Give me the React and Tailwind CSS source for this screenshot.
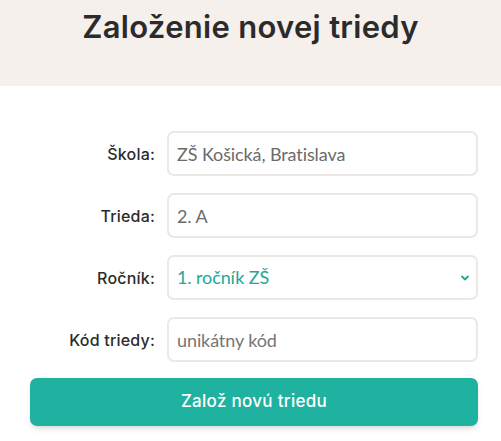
export default function App() {
  return (
    <div className="min-h-screen bg-white">
      <div className="h-[86px] bg-[#f5f0ec] flex justify-center pt-[7px]">
        <h1 className="font-['Inter',sans-serif] text-[31px] font-semibold text-[#2b2b2b] leading-[40px] tracking-[0.3px]">
          Založenie novej triedy
        </h1>
      </div>

      <form className="pt-[45px] pl-[30px] pr-[23px]">
        <div className="grid grid-cols-[125px_1fr] gap-x-3 gap-y-[17px] items-center">
          <label className="text-right font-['Inter',sans-serif] font-medium text-[16px] tracking-[0.2px] text-[#2b2b2b]">
            Škola:
          </label>
          <input
            defaultValue="ZŠ Košická, Bratislava"
            className="h-[45px] w-full px-[8px] border-2 border-[#ece8e4] rounded-[7px] font-['Lato',sans-serif] text-[18px] tracking-[-0.1px] text-[#6b6b6b] outline-none"
          />

          <label className="text-right font-['Inter',sans-serif] font-medium text-[16px] tracking-[0.2px] text-[#2b2b2b]">
            Trieda:
          </label>
          <input
            defaultValue="2. A"
            className="h-[45px] w-full px-[8px] border-2 border-[#ece8e4] rounded-[7px] font-['Lato',sans-serif] text-[18px] tracking-[-0.1px] text-[#6b6b6b] outline-none"
          />

          <label className="text-right font-['Inter',sans-serif] font-medium text-[16px] tracking-[0.2px] text-[#2b2b2b]">
            Ročník:
          </label>
          <div className="relative">
            <select className="appearance-none h-[45px] w-full px-[8px] border-2 border-[#ece8e4] rounded-[7px] bg-white font-['Lato',sans-serif] text-[18px] tracking-[-0.1px] text-[#23a797] outline-none">
              <option>1. ročník ZŠ</option>
            </select>
            <svg
              className="absolute right-[8px] top-1/2 -translate-y-1/2 pointer-events-none"
              width="10"
              height="10"
              viewBox="0 0 10 10"
            >
              <path d="M2 3.5 L5 6.5 L8 3.5" fill="none" stroke="#23a797" strokeWidth="1.8" strokeLinecap="round" strokeLinejoin="round" />
            </svg>
          </div>

          <label className="text-right font-['Inter',sans-serif] font-medium text-[16px] tracking-[0.2px] text-[#2b2b2b]">
            Kód triedy:
          </label>
          <input
            placeholder="unikátny kód"
            className="h-[45px] w-full px-[8px] border-2 border-[#ece8e4] rounded-[7px] font-['Lato',sans-serif] text-[18px] tracking-[-0.1px] text-[#6b6b6b] placeholder-[#767676] outline-none"
          />
        </div>

        <button
          type="button"
          className="mt-[16px] w-full h-[48px] rounded-[7px] bg-[#1fb2a0] text-white font-['Inter',sans-serif] font-medium text-[17px] tracking-[0.3px] shadow-md shadow-black/10"
        >
          Založ novú triedu
        </button>
      </form>
    </div>
  );
}
